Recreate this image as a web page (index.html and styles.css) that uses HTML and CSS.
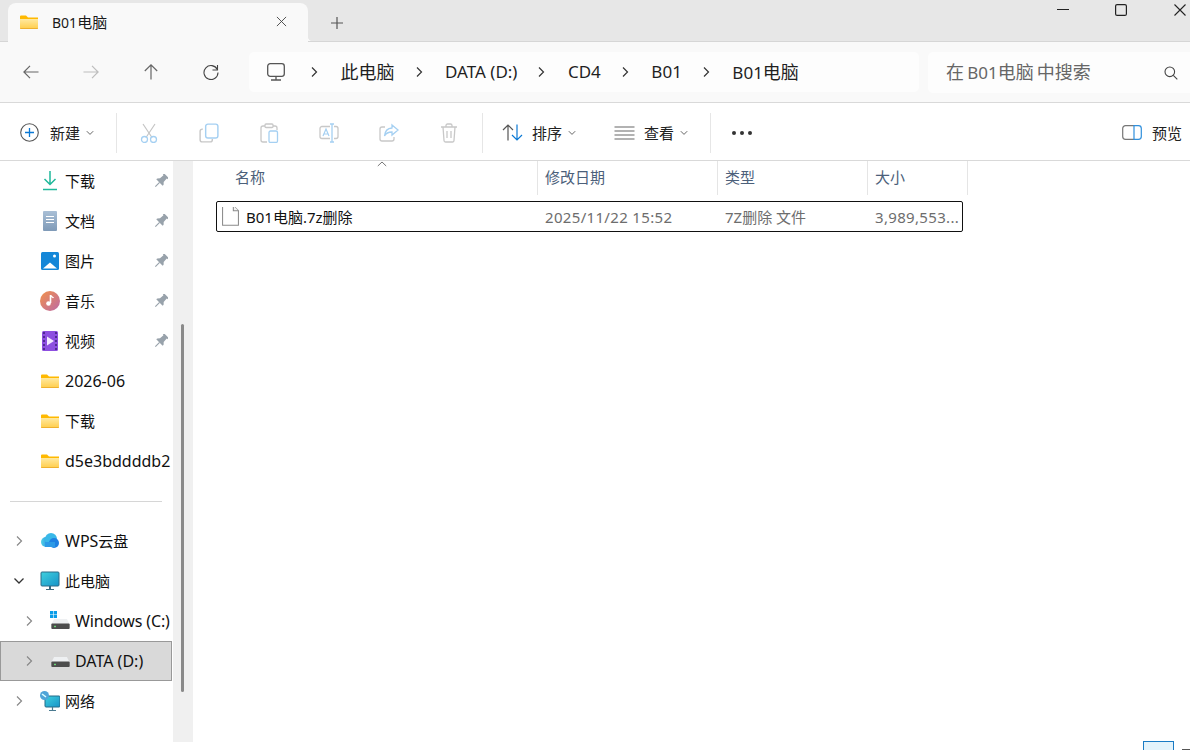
FILE: index.html
```html
<!DOCTYPE html>
<html lang="zh-CN">
<head>
<meta charset="utf-8">
<title>B01电脑</title>
<link rel="stylesheet" href="styles.css">
</head>
<body>
<svg class="defs" aria-hidden="true">
  <defs>
    <linearGradient id="gf" x1="0" y1="0" x2="0" y2="1"><stop offset="0" stop-color="#ffe9a0"/><stop offset="1" stop-color="#ffcd4a"/></linearGradient>
    <linearGradient id="gd" x1="0" y1="0" x2="0" y2="1"><stop offset="0" stop-color="#a9bfd6"/><stop offset="1" stop-color="#7f9ab8"/></linearGradient>
    <linearGradient id="gm" x1="0" y1="0" x2="1" y2="1"><stop offset="0" stop-color="#f2914a"/><stop offset="1" stop-color="#bc6aa6"/></linearGradient>
    <linearGradient id="gc" x1="0" y1="0" x2="1" y2="0"><stop offset="0" stop-color="#4fd0e6"/><stop offset="1" stop-color="#1e7fe0"/></linearGradient>
    <linearGradient id="gs" x1="0" y1="0" x2="1" y2="1"><stop offset="0" stop-color="#3fd0de"/><stop offset="1" stop-color="#1793c8"/></linearGradient>
    <symbol id="folder" viewBox="0 0 18 14">
      <path d="M0 1.500a1 1 0 0 1 1-1h5l2 2h10v2H0z" fill="#ffb900"/>
      <path d="M0 4h18v9a1 1 0 0 1-1 1H1a1 1 0 0 1-1-1z" fill="url(#gf)"/>
      <path d="M0 13h18a1 1 0 0 1-1 1H1a1 1 0 0 1-1-1z" fill="#eeb02f"/>
    </symbol>
    <symbol id="chev" viewBox="0 0 10 12"><path d="M3 1.500 7.500 6 3 10.500" fill="none" stroke="currentColor" stroke-width="1.200"/></symbol>
    <symbol id="drop" viewBox="0 0 8 6"><path d="M.8 1.200 4 4.400l3.200-3.200" fill="none" stroke="currentColor" stroke-width="1"/></symbol>
    <symbol id="pin" viewBox="0 0 14 14"><g transform="rotate(45 7 7)" fill="#98a2ab"><path d="M3.800-.6h6.400v1.800H9.300L9.600 5.800 11.500 7.800V9.200H2.500V7.800L4.400 5.800 4.700 1.200H3.800z"/><rect x="6.400" y="9" width="1.200" height="6"/></g></symbol>
    <symbol id="drive" viewBox="0 0 20 12"><path d="M3 1h14l3 6H0z" fill="#eef0f2"/><rect y="6" width="20" height="6" rx="1" fill="#4d4d4d"/><rect x="3" y="8.500" width="2" height="1.500" fill="#6fe07a"/></symbol>
  </defs>
</svg>

<div class="window">
  <header class="titlebar">
    <div class="tab">
      <svg class="tab-folder"><use href="#folder"/></svg>
      <span class="tab-title"><span class="lat-tab">B01</span>电脑</span>
      <svg class="tab-close" viewBox="0 0 12 12"><path d="M1 1l10 10M11 1 1 11" stroke="#444" stroke-width="1" fill="none"/></svg>
    </div>
    <svg class="tab-add" viewBox="0 0 12 12"><path d="M6 0v12M0 6h12" stroke="#555" stroke-width="1.200" fill="none"/></svg>
    <div class="winctl">
      <svg class="wc-min" viewBox="0 0 12 1"><path d="M0 .5h12" stroke="#222" stroke-width="1"/></svg>
      <svg class="wc-max" viewBox="0 0 12 12"><rect x=".6" y=".6" width="10.800" height="10.800" rx="1.500" fill="none" stroke="#222" stroke-width="1.200"/></svg>
      <svg class="wc-close" viewBox="0 0 12 12"><path d="M.5.5l11 11M11.500.5l-11 11" stroke="#222" stroke-width="1.100" fill="none"/></svg>
    </div>
  </header>

  <nav class="navbar">
    <div class="navbtns">
      <span class="navbtn"><svg viewBox="0 0 16 14"><path d="M15.500 7H1M7 .8 .9 7 7 13.200" fill="none" stroke="#666" stroke-width="1.200"/></svg></span>
      <span class="navbtn"><svg viewBox="0 0 16 14"><path d="M.5 7H15M9 .8 15.100 7 9 13.200" fill="none" stroke="#bdbdbd" stroke-width="1.200"/></svg></span>
      <span class="navbtn"><svg viewBox="0 0 14 16"><path d="M7 15.500V1M.8 7 7 .9 13.200 7" fill="none" stroke="#666" stroke-width="1.200"/></svg></span>
      <span class="navbtn"><svg viewBox="0 0 16 16"><path d="M14.300 5.500A7 7 0 1 0 15 8.500" fill="none" stroke="#444" stroke-width="1.100"/><path d="M14.500 1v5H9.500" fill="none" stroke="#444" stroke-width="1.100"/></svg></span>
    </div>
    <div class="address">
      <svg class="pc-icon" viewBox="0 0 18 18"><rect x=".7" y=".7" width="16.600" height="12.600" rx="2.500" fill="none" stroke="#555" stroke-width="1.300"/><path d="M9 13.500v3M4 17h10" stroke="#555" stroke-width="1.300" fill="none"/></svg>
      <svg class="crumb-sep"><use href="#chev"/></svg><span class="crumb">此电脑</span>
      <svg class="crumb-sep"><use href="#chev"/></svg><span class="crumb lat-crumb">DATA (D:)</span>
      <svg class="crumb-sep"><use href="#chev"/></svg><span class="crumb lat-crumb">CD4</span>
      <svg class="crumb-sep"><use href="#chev"/></svg><span class="crumb lat-crumb">B01</span>
      <svg class="crumb-sep"><use href="#chev"/></svg><span class="crumb"><span class="lat-crumb">B01</span>电脑</span>
    </div>
    <div class="search">
      <span class="search-text">在 <span class="lat-crumb">B01</span>电脑 中搜索</span>
      <svg class="search-icon" viewBox="0 0 14 14"><circle cx="5.800" cy="5.800" r="4.800" fill="none" stroke="#444" stroke-width="1.100"/><path d="M9.300 9.300 13.300 13.300" stroke="#444" stroke-width="1.100"/></svg>
    </div>
  </nav>

  <div class="toolbar">
    <div class="tool tool-new">
      <svg class="ic19" viewBox="0 0 19 19"><circle cx="9.500" cy="9.500" r="8.800" fill="none" stroke="#555" stroke-width="1.100"/><path d="M9.500 5v9M5 9.500h9" stroke="#0a78d4" stroke-width="1.300"/></svg>
      <span class="tool-label">新建</span>
      <svg class="tool-drop"><use href="#drop"/></svg>
    </div>
    <span class="tsep"></span>
    <div class="tool-group">
      <span class="iconbtn"><svg viewBox="0 0 18 20"><path d="M3 1l9 13.500M15 1 6 14.500" stroke="#c4c4c4" stroke-width="1.200" fill="none"/><circle cx="4.500" cy="16.500" r="3" fill="none" stroke="#a5d0f2" stroke-width="1.300"/><circle cx="13.500" cy="16.500" r="3" fill="none" stroke="#a5d0f2" stroke-width="1.300"/></svg></span>
      <span class="iconbtn"><svg viewBox="0 0 18 18"><path d="M3.500 5.500H3A2 2 0 0 0 1 7.500V15a2 2 0 0 0 2 2h7a2 2 0 0 0 2-2v-.5" fill="none" stroke="#c8c8c8" stroke-width="1.300"/><rect x="6" y="1" width="11" height="12.500" rx="2" fill="none" stroke="#a5d0f2" stroke-width="1.300"/></svg></span>
      <span class="iconbtn"><svg viewBox="0 0 18 20"><path d="M5 3H3a2 2 0 0 0-2 2v12a2 2 0 0 0 2 2h4M13 3h2a2 2 0 0 1 2 2v2" fill="none" stroke="#c8c8c8" stroke-width="1.300"/><rect x="5" y="1" width="8" height="3.500" rx="1" fill="none" stroke="#c8c8c8" stroke-width="1.300"/><rect x="9" y="8" width="8.500" height="11.500" rx="1.500" fill="none" stroke="#a5d0f2" stroke-width="1.300"/></svg></span>
      <span class="iconbtn"><svg viewBox="0 0 20 20"><path d="M11 3.500H3a2 2 0 0 0-2 2v8a2 2 0 0 0 2 2h8M15 3.500h2a2 2 0 0 1 2 2v8a2 2 0 0 1-2 2h-2" fill="none" stroke="#c8c8c8" stroke-width="1.300"/><path d="M13 1v18M11 1h4M11 19h4" stroke="#a5d0f2" stroke-width="1.300" fill="none"/><path d="M4 13 7 6l3 7M5 11h4" stroke="#a5d0f2" stroke-width="1.200" fill="none"/></svg></span>
      <span class="iconbtn"><svg viewBox="0 0 20 18"><path d="M6 3H3a2 2 0 0 0-2 2v10a2 2 0 0 0 2 2h10a2 2 0 0 0 2-2v-2" fill="none" stroke="#c8c8c8" stroke-width="1.300"/><path d="M13 1l6 5-6 5V8C9 8 7 9 5.500 12 6 7 9 4.200 13 4z" fill="none" stroke="#a5d0f2" stroke-width="1.300"/></svg></span>
      <span class="iconbtn"><svg viewBox="0 0 18 20"><path d="M1 4h16M6 4V2.500A1.500 1.500 0 0 1 7.500 1h3A1.500 1.500 0 0 1 12 2.500V4M3 4l1 13.500A1.500 1.500 0 0 0 5.500 19h7a1.500 1.500 0 0 0 1.500-1.500L15 4M7 8v7M11 8v7" fill="none" stroke="#c8c8c8" stroke-width="1.300"/></svg></span>
    </div>
    <span class="tsep tsep-b"></span>
    <div class="tool tool-sort">
      <svg class="ic20" viewBox="0 0 21 17"><path d="M6 16.500V1M1 6l5-5 5 5" fill="none" stroke="#555" stroke-width="1.200"/><path d="M15 .5V16M10 11l5 5 5-5" fill="none" stroke="#0a78d4" stroke-width="1.200"/></svg>
      <span class="tool-label">排序</span>
      <svg class="tool-drop"><use href="#drop"/></svg>
    </div>
    <div class="tool tool-view">
      <svg class="ic20" viewBox="0 0 20 14"><path d="M0 1h20M0 5h20M0 9h20M0 13h20" stroke="#666" stroke-width="1.100"/></svg>
      <span class="tool-label">查看</span>
      <svg class="tool-drop"><use href="#drop"/></svg>
    </div>
    <span class="tsep tsep-c"></span>
    <div class="dots"><i></i><i></i><i></i></div>
    <div class="tool tool-preview">
      <svg class="ic20" viewBox="0 0 20 15"><path d="M12 .7H3.500A2.800 2.800 0 0 0 .7 3.500v8a2.800 2.800 0 0 0 2.800 2.800H12" fill="none" stroke="#777" stroke-width="1.200"/><path d="M12 .7h4.500a2.800 2.800 0 0 1 2.800 2.800v8a2.800 2.800 0 0 1-2.800 2.800H12z" fill="none" stroke="#2f8fdc" stroke-width="1.200"/></svg>
      <span class="tool-label">预览</span>
    </div>
  </div>

  <div class="body">
    <aside class="sidebar">
      <div class="row"><span class="slot"></span><svg class="ic" viewBox="0 0 20 20"><path d="M10 0v13M4.500 8 10 13.500 15.500 8" fill="none" stroke="#1fb89a" stroke-width="1.500"/><path d="M3 18.500h14" stroke="#1fb89a" stroke-width="1.500"/></svg><span class="label">下载</span><svg class="pin"><use href="#pin"/></svg></div>
      <div class="row"><span class="slot"></span><svg class="ic" viewBox="0 0 20 20"><rect x="3" y="0" width="14" height="20" rx="1" fill="url(#gd)"/><path d="M6 5.500h8M6 8.500h8M6 11.500h8" stroke="#fff" stroke-width="1"/></svg><span class="label">文档</span><svg class="pin"><use href="#pin"/></svg></div>
      <div class="row"><span class="slot"></span><svg class="ic" viewBox="0 0 20 20"><rect x="1" y="1" width="18" height="18" rx="1.500" fill="#1487d8"/><path d="M3 17.500 10 11.500 17 17.500z" fill="#fff"/><circle cx="14.500" cy="5" r="1.500" fill="#fff"/></svg><span class="label">图片</span><svg class="pin"><use href="#pin"/></svg></div>
      <div class="row"><span class="slot"></span><svg class="ic" viewBox="0 0 20 20"><circle cx="10" cy="10" r="10" fill="url(#gm)"/><path d="M10.500 4v8" stroke="#fff" stroke-width="1.600"/><path d="M10.500 4.500c1 1.500 2.500 1.500 3 2.500" stroke="#fff" stroke-width="1.400" fill="none"/><circle cx="8.500" cy="12.500" r="2.300" fill="#fff"/></svg><span class="label">音乐</span><svg class="pin"><use href="#pin"/></svg></div>
      <div class="row"><span class="slot"></span><svg class="ic" viewBox="0 0 20 20"><rect x="2" y="0" width="16" height="20" rx="1.500" fill="#8d4fe0"/><path d="M7 5.500v9l7-4.500z" fill="#f3e9ff"/><path d="M3 2h2M3 6h2M3 10h2M3 14h2M3 18h2M15 2h2M15 6h2M15 10h2M15 14h2M15 18h2" stroke="#3d1f7a" stroke-width="1.500"/></svg><span class="label">视频</span><svg class="pin"><use href="#pin"/></svg></div>
      <div class="row"><span class="slot"></span><svg class="ic ic-folder"><use href="#folder"/></svg><span class="label lat">2026-06</span></div>
      <div class="row"><span class="slot"></span><svg class="ic ic-folder"><use href="#folder"/></svg><span class="label">下载</span></div>
      <div class="row"><span class="slot"></span><svg class="ic ic-folder"><use href="#folder"/></svg><span class="label lat">d5e3bddddb2</span></div>
      <div class="divider"></div>
      <div class="row"><span class="slot"><svg class="chev"><use href="#chev"/></svg></span><svg class="ic" viewBox="0 0 20 20"><circle cx="6" cy="11" r="5" fill="url(#gc)"/><circle cx="11" cy="8" r="6" fill="#39b8e8"/><circle cx="14" cy="12" r="5" fill="#1e80e2"/><rect x="5" y="11" width="10" height="5" fill="#2c9ae6"/></svg><span class="label"><span class="lat">WPS</span>云盘</span></div>
      <div class="row"><span class="slot"><svg class="chev-open" viewBox="0 0 12 8"><path d="M1.500 1.500 6 6l4.500-4.500" fill="none" stroke="#333" stroke-width="1.300"/></svg></span><svg class="ic" viewBox="0 0 20 20"><rect x="1" y="1" width="18" height="14" rx="1" fill="url(#gs)" stroke="#2a6a88"/><path d="M10 15v3" stroke="#3a6a80" stroke-width="2"/><path d="M6 18.500h8" stroke="#3a6a80" stroke-width="1"/></svg><span class="label">此电脑</span></div>
      <div class="row row-sub"><span class="slot"><svg class="chev"><use href="#chev"/></svg></span><svg class="ic" viewBox="0 0 20 20"><path d="M0 0h3.200v3.200H0zM3.800 0H7v3.200H3.800zM0 3.800h3.200V7H0zM3.800 3.800H7V7H3.800z" fill="#0a9de8"/><use href="#drive" x="1" y="7" width="19" height="11"/></svg><span class="label lat lat-tight">Windows (C:)</span></div>
      <div class="row row-sub row-sel"><span class="slot"><svg class="chev"><use href="#chev"/></svg></span><svg class="ic" viewBox="0 0 20 20"><use href="#drive" x="1" y="5" width="19" height="11"/></svg><span class="label lat">DATA (D:)</span></div>
      <div class="row"><span class="slot"><svg class="chev"><use href="#chev"/></svg></span><svg class="ic" viewBox="0 0 20 20"><rect x="5" y="5" width="15" height="11" rx="1" fill="url(#gs)" stroke="#256a88"/><path d="M12.500 16v3M9 19.500h7" stroke="#4a7a90" stroke-width="1.200"/><circle cx="4.500" cy="4.500" r="4.500" fill="#4fa4d8"/><path d="M2 3l4 3" stroke="#dff" stroke-width="1.500"/></svg><span class="label">网络</span></div>
    </aside>
    <div class="track"><div class="thumb"></div></div>

    <main class="content">
      <div class="cols colhead">
        <div class="col col-name"><span>名称</span><svg class="sort-caret" viewBox="0 0 10 6"><path d="M.8 5 5 1l4.200 4" fill="none" stroke="#777" stroke-width="1"/></svg></div>
        <div class="col">修改日期</div>
        <div class="col">类型</div>
        <div class="col">大小</div>
      </div>
      <div class="cols filerow">
        <div class="cell cell-name">
          <svg class="file-ic" viewBox="0 0 18 22"><path d="M.6.600H12L17.400 6V21.400H.6z" fill="#fff" stroke="#8a8a8a" stroke-width="1.100"/><path d="M12 .6V6h5.400" fill="#f3f3f3" stroke="#8a8a8a" stroke-width="1.100"/></svg>
          <span>B01电脑.7z删除</span>
        </div>
        <div class="cell cell-num">2025/11/22 15:52</div>
        <div class="cell">7Z删除 文件</div>
        <div class="cell cell-num">3,989,553...</div>
      </div>
    </main>
  </div>
  <div class="corner">
    <span class="mini"></span>
    <span class="mini-dark"></span>
  </div>
</div>
</body>
</html>
```

FILE: styles.css
```css
* { box-sizing: border-box; }
html, body { margin: 0; padding: 0; height: 100%; overflow: hidden; background: #fff; }
body { font-family: "Noto Sans", "Noto Sans CJK SC", sans-serif; color: #1a1a1a; }
.defs { position: absolute; width: 0; height: 0; }
svg { display: block; flex: none; }

.window { width: 1190px; height: 750px; display: flex; flex-direction: column; overflow: hidden; position: relative; }

/* title bar */
.titlebar { height: 42px; background: #e7e7e7; border-bottom: 1px solid #d6d6d6; display: flex; align-items: flex-end; padding-left: 8px; }
.tab { width: 300px; height: 39px; margin-bottom: -1px; background: #f9f9f9; border-radius: 8px 8px 0 0; display: flex; align-items: center; padding-left: 12px; position: relative; }
.tab::after { content: ""; position: absolute; right: -5px; bottom: 1px; width: 5px; height: 5px; background: radial-gradient(circle at 100% 0, transparent 5px, #f9f9f9 5.5px); }
.tab-folder { width: 18px; height: 14px; margin-top: -1px; }
.tab-title { margin-left: 14px; font-size: 15px; width: 222px; line-height: 20px; }
.lat-tab { font-size: 14px; }
.tab-close { width: 11px; height: 11px; margin-left: 2px; margin-top: -2px; }
.tab-add { width: 12px; height: 12px; margin: 0 0 12px 23px; }
.winctl { margin-left: auto; align-self: flex-start; display: flex; align-items: flex-start; padding-top: 4px; padding-right: 4px; }
.wc-min { width: 12px; height: 1px; margin-top: 5px; }
.wc-max { width: 12px; height: 12px; margin-left: 46px; }
.wc-close { width: 12px; height: 12px; margin-left: 47px; }

/* nav bar */
.navbar { height: 61px; background: #f9f9f9; border-bottom: 1px solid #d9d9d9; display: flex; align-items: flex-start; padding-top: 10px; }
.navbtns { display: flex; width: 249px; height: 40px; }
.navbtn { width: 60px; height: 40px; display: flex; align-items: center; justify-content: center; }
.navbtn:first-child { margin-left: 1px; }
.navbtn svg { width: 16px; height: 16px; }
.address { width: 670px; height: 40px; background: #fdfdfd; border-radius: 5px; display: flex; align-items: center; padding-left: 18px; }
.pc-icon { width: 18px; height: 18px; margin-right: 24px; }
.crumb-sep { width: 10px; height: 12px; color: #333; }
.crumb { font-size: 18px; line-height: 24px; margin-left: 21.5px; margin-right: 19px; white-space: nowrap; color: #1f1f1f; }
.lat-crumb { font-size: 17px; }
.search { width: 262px; height: 41px; margin-left: 9px; background: #fdfdfd; border-radius: 5px 0 0 5px; display: flex; align-items: center; padding-left: 18px; }
.search-text { font-size: 18px; color: #666; line-height: 24px; white-space: nowrap; width: 218px; word-spacing: -1.5px; }
.search-icon { width: 14px; height: 14px; }

/* toolbar */
.toolbar { height: 58px; border-bottom: 1px solid #d9d9d9; background: #fff; display: flex; align-items: center; padding-top: 2px; }
.tool { display: flex; align-items: center; }
.tool-label { font-size: 15px; line-height: 20px; white-space: nowrap; color: #222; }
.tool-drop { width: 8px; height: 6px; color: #666; margin-left: 6px; }
.tool-new { padding-left: 20px; width: 116px; }
.ic19 { width: 19px; height: 19px; margin-right: 11px; }
.ic20 { width: 20px; height: 16px; margin-right: 11px; }
.tsep { width: 1px; height: 40px; background: #e6e6e6; flex: none; }
.tool-group { display: flex; padding-left: 2px; width: 365px; }
.iconbtn { width: 60px; height: 24px; display: flex; align-items: center; justify-content: center; }
.iconbtn svg { width: 20px; height: 20px; }
.tool-sort { padding-left: 19px; width: 131px; }
.tool-view { width: 96px; }
.tool-view .ic20 { width: 21px; height: 14px; margin-right: 9px; }
.tool-sort .ic20 { width: 21px; height: 17px; margin-right: 9px; }
.dots { display: flex; gap: 4px; margin-left: 21px; width: 20px; }
.dots i { width: 4px; height: 4px; border-radius: 50%; background: #333; flex: none; }
.tool-preview { margin-left: auto; padding-right: 8px; }
.tool-preview .ic20 { width: 20px; height: 15px; margin-right: 10px; }

/* body */
.body { flex: 1; display: flex; min-height: 0; }
.sidebar { width: 173px; flex: none; overflow: hidden; background: #fff; }
.row { height: 40px; margin-right: 1px; display: flex; align-items: center; font-size: 15px; white-space: nowrap; color: #111; }
.row-sub .slot { width: 50px; padding-left: 24px; }
.row-sel { background: #d9d9d9; box-shadow: inset 0 0 0 1px #999; }
.slot { width: 40px; flex: none; padding-left: 14px; display: flex; align-items: center; }
.chev { width: 10px; height: 12px; color: #888; }
.chev-open { width: 12px; height: 8px; margin-left: -1px; }
.ic { width: 20px; height: 20px; margin-right: 5px; }
.ic-folder { width: 18px; height: 14px; margin-left: 1px; margin-right: 6px; }
.label { line-height: 20px; }
.lat { font-size: 16px; }
.lat-tight { letter-spacing: -.15px; }
.pin { width: 14px; height: 14px; margin-left: auto; margin-right: 4px; }
.divider { height: 1px; margin: 20px 10px 19px 10px; width: 152px; background: #d6d6d6; }
.track { width: 20px; flex: none; height: 581px; background: #f0f0f0; padding: 163px 0 0 8px; }
.thumb { width: 3px; height: 368px; background: #8a8a8a; border-radius: 2px; }

/* content */
.content { flex: 1; min-width: 0; padding-left: 23px; }
.cols { display: grid; grid-template-columns: 322px 180px 150px 100px; }
.colhead { height: 34px; }
.col { border-right: 1px solid #e5e5e5; font-size: 15px; line-height: 33px; padding-left: 7px; color: #4c607a; position: relative; white-space: nowrap; }
.col-name { padding-left: 19px; }
.sort-caret { position: absolute; left: 161px; top: 0; width: 10px; height: 6px; }
.filerow { width: 747px; height: 31px; margin-top: 6px; border: 1px solid #111; border-radius: 2px; grid-template-columns: 320px 180px 150px 95px; align-items: center; }
.cell { font-size: 15px; line-height: 20px; padding-left: 8px; color: #6d6d6d; white-space: nowrap; overflow: hidden; }
.cell-num { letter-spacing: .33px; }
.cell-name { padding-left: 5px; display: flex; align-items: center; color: #111; }
.file-ic { width: 17px; height: 21px; margin-right: 7px; margin-top: -2px; }

.corner { position: absolute; left: 1143px; top: 741px; display: flex; align-items: flex-start; }
.mini { display: block; width: 31px; height: 12px; background: #e3f3fb; border: 1px solid #1a7bc4; }
.mini-dark { display: block; width: 8px; height: 2px; background: #555; margin: 8px 0 0 8px; }
```
